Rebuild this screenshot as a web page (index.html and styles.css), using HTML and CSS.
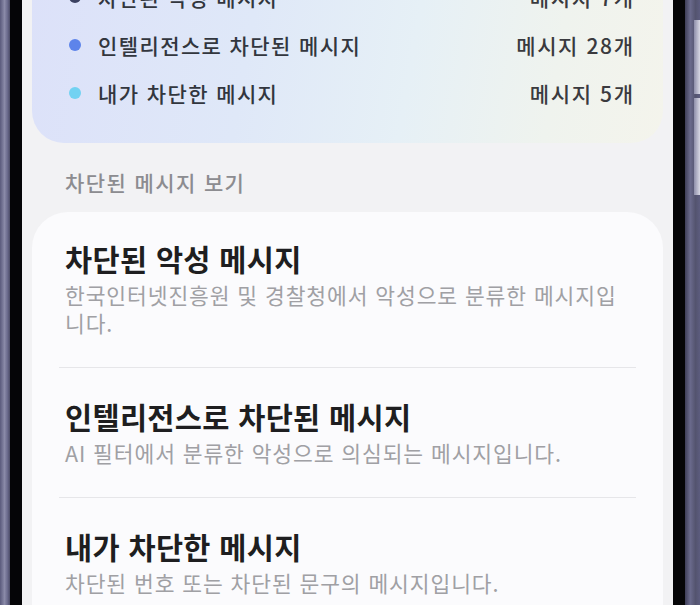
FILE: index.html
```html
<!DOCTYPE html>
<html lang="ko">
<head>
<meta charset="utf-8">
<link rel="stylesheet" href="styles.css">
</head>
<body>
<div class="device">
  <div class="frame-outer-left"></div>
  <div class="frame-black"></div>
  <main class="screen">
    <section class="summary">
      <div class="summary-row">
        <span class="dot dot-navy"></span>
        <span class="summary-label">차단된 악성 메시지</span>
        <span class="summary-count">메시지 7개</span>
      </div>
      <div class="summary-row">
        <span class="dot dot-blue"></span>
        <span class="summary-label">인텔리전스로 차단된 메시지</span>
        <span class="summary-count">메시지 28개</span>
      </div>
      <div class="summary-row">
        <span class="dot dot-cyan"></span>
        <span class="summary-label">내가 차단한 메시지</span>
        <span class="summary-count">메시지 5개</span>
      </div>
    </section>

    <h2 class="section-label">차단된 메시지 보기</h2>

    <section class="list-card">
      <div class="list-item">
        <div class="item-title">차단된 악성 메시지</div>
        <div class="item-desc">한국인터넷진흥원 및 경찰청에서 악성으로 분류한 메시지입니다.</div>
      </div>
      <div class="list-item">
        <div class="item-title">인텔리전스로 차단된 메시지</div>
        <div class="item-desc">AI 필터에서 분류한 악성으로 의심되는 메시지입니다.</div>
      </div>
      <div class="list-item">
        <div class="item-title">내가 차단한 메시지</div>
        <div class="item-desc">차단된 번호 또는 차단된 문구의 메시지입니다.</div>
      </div>
    </section>
  </main>
  <div class="frame-black"></div>
  <div class="frame-outer-right">
    <div class="side-button btn-a"></div>
    <div class="side-button btn-b"></div>
  </div>
</div>
</body>
</html>
```

FILE: styles.css
```css
* { box-sizing: border-box; }

html, body {
  margin: 0;
  padding: 0;
  width: 700px;
  height: 605px;
  overflow: hidden;
  background: #000;
  font-family: "Noto Sans CJK KR", "Noto Sans", sans-serif;
}

.device {
  display: flex;
  width: 700px;
  height: 605px;
}

.frame-outer-left {
  width: 10px;
  background: linear-gradient(90deg, #5a5a7c 0%, #8a8aa8 45%, #6a6a8c 75%, #4a4a66 100%);
}

.frame-black {
  width: 12px;
  background: #050507;
}

.frame-outer-right {
  width: 15px;
  display: flex;
  flex-direction: column;
  align-items: flex-end;
  padding-top: 20px;
  gap: 4px;
  background: linear-gradient(90deg, #3e3e58 0%, #6a6a8c 35%, #54546f 70%, #5c5c7e 100%);
}

.side-button {
  width: 6px;
  background: linear-gradient(90deg, #8e8eaa, #d8d8e4);
}

.btn-a { height: 74px; }
.btn-b { height: 97px; }

.screen {
  flex: 1;
  background: #f2f2f4;
  overflow: hidden;
  padding: 0 10px;
  display: flex;
  flex-direction: column;
}

.summary {
  margin-top: -47px;
  padding: 20px 30px 26px 37px;
  border-radius: 32px;
  background: linear-gradient(100deg, #dce1f9 0%, #dfe8f8 35%, #e6f0f6 60%, #eff3ee 82%, #f4f4ec 100%);
}

.summary-row {
  display: flex;
  align-items: center;
  height: 48px;
}

.dot {
  width: 12px;
  height: 12px;
  border-radius: 50%;
  flex: none;
}

.dot-navy { background: #3b4161; }
.dot-blue { background: #5d84ea; }
.dot-cyan { background: #72d2f2; }

.summary-label {
  margin-left: 17px;
  font-size: 21px;
  letter-spacing: 1.4px;
  font-weight: 500;
  color: #32363e;
  flex: 1;
}

.summary-count {
  font-size: 21px;
  letter-spacing: 1.6px;
  margin-right: -1.6px;
  font-weight: 500;
  color: #3a3a3e;
}

.section-label {
  margin: 27px 0 18px 33px;
  font-size: 21px;
  letter-spacing: 1.4px;
  line-height: 24px;
  font-weight: 500;
  color: #8c8c90;
}

.list-card {
  background: #fbfbfd;
  border-radius: 36px 36px 0 0;
  padding-bottom: 40px;
}

.list-item {
  margin: 0 27px;
  padding: 30px 7px 30px 6px;
  border-bottom: 1px solid #e6e6e9;
}

.list-item:first-child { padding-top: 28px; }
.list-item:last-child { border-bottom: none; }

.item-title {
  font-size: 29.5px;
  letter-spacing: 0.3px;
  line-height: 36px;
  font-weight: 700;
  color: #1e1e20;
}

.item-desc {
  margin-top: 5px;
  font-size: 21.5px;
  letter-spacing: 0.9px;
  line-height: 28px;
  color: #a0a0a4;
}
```
